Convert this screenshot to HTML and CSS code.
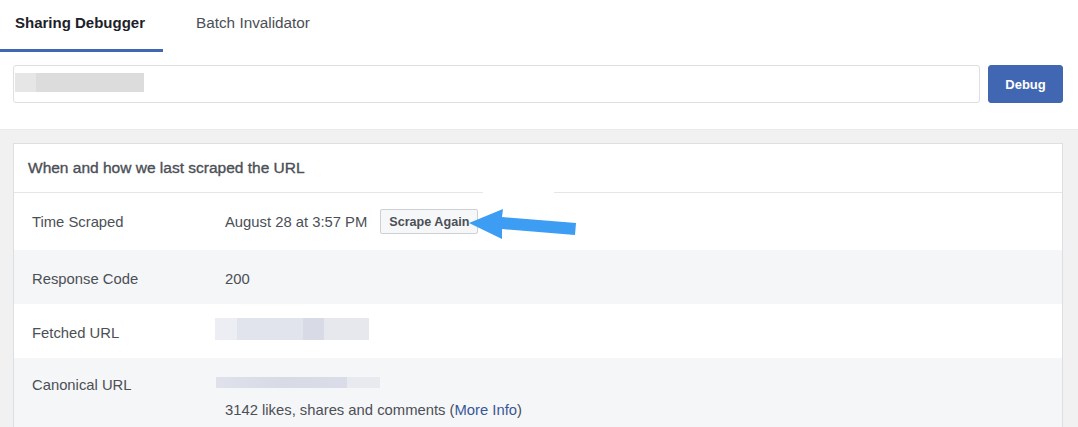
FILE: index.html
```html
<!DOCTYPE html>
<html lang="en">
<head>
  <meta charset="UTF-8" />
  <title>Sharing Debugger</title>
  <link rel="stylesheet" href="styles.css">
</head>
<body>
  <div class="tabs">
    <div class="tab active">Sharing Debugger</div>
    <div class="tab">Batch Invalidator</div>
  </div>

  <div class="search">
    <div class="url-input"><span class="blur blur-input"></span></div>
    <button class="debug-btn">Debug</button>
  </div>

  <div class="results">
    <div class="card">
      <div class="card-header">When and how we last scraped the URL</div>

      <div class="row row-scraped">
        <div class="label">Time Scraped</div>
        <div class="value">
          August 28 at 3:57 PM
          <button class="scrape-btn">Scrape Again</button>
        </div>
      </div>

      <div class="row alt">
        <div class="label">Response Code</div>
        <div class="value">200</div>
      </div>

      <div class="row">
        <div class="label">Fetched URL</div>
        <div class="value"><span class="blur blur-fetched"></span></div>
      </div>

      <div class="row alt row-canonical">
        <div class="label">Canonical URL</div>
        <div class="value">
          <div class="canonical"><span class="blur blur-canonical"></span></div>
          <div class="likes">3142 likes, shares and comments (<a href="#">More Info</a>)</div>
        </div>
      </div>
    </div>
  </div>

  <!-- annotation arrow drawn over the screenshot -->
  <svg class="annotation" width="1078" height="427" viewBox="0 0 1078 427">
    <rect x="483" y="185" width="71" height="8" fill="#fff" />
    <polygon points="469,223 503,209 502,217 576,223 575,235 502,229 502,239" fill="#3d9df3" />
  </svg>
</body>
</html>
```

FILE: styles.css
```css
* {
  box-sizing: border-box;
}

body {
  margin: 0;
  font-family: 'Liberation Sans', Arial, sans-serif;
  font-size: 14.8px;
  color: #4b4f56;
  background: #fff;
  position: relative;
  height: 427px;
  overflow: hidden;
}

.tabs {
  display: flex;
  gap: 18px;
  height: 52px;
}

.tab {
  padding: 0 18px 0 15px;
  line-height: 45px;
  font-size: 15.3px;
  color: #4b4f56;
  border-bottom: 3px solid transparent;
  height: 52px;
}

.tab.active {
  font-weight: 700;
  font-size: 15px;
  color: #1d2129;
  border-bottom-color: #4267b2;
}

.search {
  display: flex;
  gap: 8px;
  padding: 13px 15px 26px 13px;
}

.url-input {
  flex: 1;
  height: 38px;
  border: 1px solid #dddfe2;
  border-radius: 3px;
  padding: 7px 1px;
}

.blur {
  display: block;
  background: linear-gradient(90deg, #e6e6e6 0, #e6e6e6 16%, #dcdcdc 16%, #dcdcdc 100%);
}

.blur-input {
  width: 129px;
  height: 19px;
}

.debug-btn {
  width: 75px;
  height: 38px;
  border: 1px solid #4267b2;
  border-radius: 3px;
  background: #4267b2;
  color: #fff;
  font-family: inherit;
  font-weight: 700;
  font-size: 13px;
}

.results {
  background: #f1f1f1;
  border-top: 1px solid #eaeaea;
  padding: 13px 15px 0 13px;
}

.card {
  background: #fff;
  border: 1px solid #dddfe2;
  border-bottom: none;
}

.card-header {
  height: 49px;
  line-height: 48px;
  padding-left: 14px;
  border-bottom: 1px solid #e5e6e9;
  color: #4b4f56;
  font-size: 15.5px;
  -webkit-text-stroke: 0.35px #4b4f56;
}

.row {
  display: grid;
  grid-template-columns: 193px 1fr;
  padding: 20px 18px 16px;
  line-height: 18px;
}

.row.alt {
  background: #f5f6f7;
}

.row-scraped {
  padding: 16px 18px;
  align-items: center;
}

.row-scraped .value {
  display: flex;
  align-items: center;
  gap: 13px;
}

.scrape-btn {
  height: 25px;
  padding: 0 8px;
  border: 1px solid #ced0d4;
  border-radius: 2px;
  background: #f6f7f9;
  color: #4b4f56;
  font-family: inherit;
  font-weight: 700;
  font-size: 12.6px;
}

.blur-fetched {
  width: 154px;
  height: 22px;
  margin: -6px 0 0 -10px;
  background: linear-gradient(90deg, #eceef3 0, #eceef3 14%, #e1e4ec 14%, #e1e4ec 57%, #d8dbe5 57%, #d8dbe5 71%, #e6e8ee 71%);
}

.row-canonical {
  padding-top: 18px;
}

.canonical {
  height: 18px;
}

.blur-canonical {
  width: 164px;
  height: 11px;
  margin: 1px 0 0 -9px;
  background: linear-gradient(90deg, #dfe2ea 0, #d8dbe6 40%, #dadde7 80%, #e8eaf0 80%);
}

.likes {
  margin-top: 6px;
}

.likes a {
  color: #365899;
  text-decoration: none;
}

.annotation {
  position: absolute;
  left: 0;
  top: 0;
  pointer-events: none;
}
```
